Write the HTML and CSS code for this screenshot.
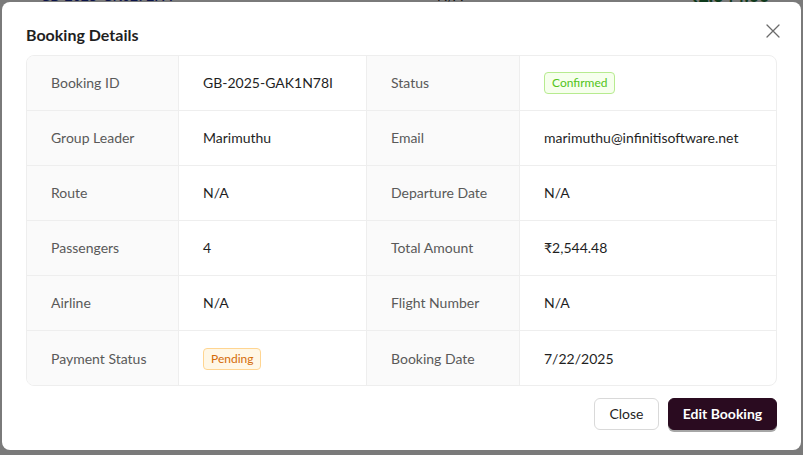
FILE: index.html
```html
<!DOCTYPE html>
<html>
<head>
<meta charset="utf-8">
<link rel="stylesheet" href="styles.css">
</head>
<body>
<div class="page">
  <div class="bg-row">
    <span class="bg-id">GB-2025-GK0272PA</span>
    <span class="bg-na">N/A</span>
    <span class="bg-dash">-</span>
    <span class="bg-amt">₹2,644.00</span>
  </div>
</div>
<div class="mask"></div>
<div class="modal">
  <div class="modal-header">
    <h2 class="modal-title">Booking Details</h2>
    <button class="modal-close" aria-label="Close">
      <svg width="14" height="14" viewBox="0 0 14 14"><path d="M1 1L13 13M13 1L1 13" stroke="#6b6b6b" stroke-width="1.3" fill="none" stroke-linecap="round"/></svg>
    </button>
  </div>
  <div class="desc">
    <div class="lbl">Booking ID</div><div class="val">GB-2025-GAK1N78I</div>
    <div class="lbl">Status</div><div class="val"><span class="tag tag-green">Confirmed</span></div>
    <div class="lbl">Group Leader</div><div class="val">Marimuthu</div>
    <div class="lbl">Email</div><div class="val">marimuthu@infinitisoftware.net</div>
    <div class="lbl">Route</div><div class="val">N/A</div>
    <div class="lbl">Departure Date</div><div class="val">N/A</div>
    <div class="lbl">Passengers</div><div class="val">4</div>
    <div class="lbl">Total Amount</div><div class="val">₹2,544.48</div>
    <div class="lbl">Airline</div><div class="val">N/A</div>
    <div class="lbl">Flight Number</div><div class="val">N/A</div>
    <div class="lbl last">Payment Status</div><div class="val last"><span class="tag tag-orange">Pending</span></div>
    <div class="lbl last">Booking Date</div><div class="val last">7/22/2025</div>
  </div>
  <div class="modal-footer">
    <button class="btn btn-default">Close</button>
    <button class="btn btn-primary">Edit Booking</button>
  </div>
</div>
</body>
</html>
```

FILE: styles.css
```css
* { box-sizing: border-box; }
html, body { margin: 0; padding: 0; }
body {
  width: 803px;
  height: 455px;
  overflow: hidden;
  background: #fff;
  font-family: Lato, "Noto Sans", sans-serif;
  position: relative;
}
.page { height: 455px; }
.bg-row {
  display: flex;
  align-items: center;
  height: 20px;
  margin-top: -15px;
  font-size: 14px;
}
.bg-id { margin-left: 40px; width: 397px; color: #1a2a9a; font-weight: 600; }
.bg-na { width: 166px; color: #222; }
.bg-dash { width: 85px; color: #222; }
.bg-amt { color: #1e7a3a; font-size: 18px; font-weight: 700; }
.mask {
  position: fixed;
  inset: 0;
  background: rgba(0, 0, 0, 0.52);
}
.modal {
  position: absolute;
  left: 2px;
  top: 2px;
  width: 799px;
  height: 448px;
  background: #fff;
  border-radius: 8px;
  padding: 20px 24px;
  display: flex;
  flex-direction: column;
}
.modal-header {
  display: flex;
  align-items: center;
  justify-content: space-between;
  margin-bottom: 8px;
  padding-top: 1px;
}
.modal-title {
  margin: 0;
  font-size: 16px;
  line-height: 24px;
  font-weight: 700;
  color: #1f1f1f;
}
.modal-close {
  position: absolute;
  top: 18px;
  right: 17px;
  width: 22px;
  height: 22px;
  border: 0;
  background: none;
  padding: 0;
  display: flex;
  align-items: center;
  justify-content: center;
}
.desc {
  display: grid;
  grid-template-columns: 152px 188px 153px 1fr;
  border: 1px solid #eeeeee;
  border-radius: 8px;
  overflow: hidden;
}
.lbl, .val {
  padding: 16px 24px;
  font-size: 14px;
  line-height: 22px;
  border-bottom: 1px solid #eeeeee;
  height: 55px;
  display: flex;
  align-items: center;
}
.lbl {
  background: #fafafa;
  color: #595959;
  border-right: 1px solid #eeeeee;
}
.val {
  color: #1f1f1f;
  border-right: 1px solid #eeeeee;
}
.val:nth-child(4n) { border-right: 0; }
.last { border-bottom: 0; }
.tag {
  display: inline-block;
  font-size: 12px;
  line-height: 20px;
  padding: 0 7px;
  border-radius: 4px;
  border: 1px solid;
}
.tag-green { color: #52c41a; background: #f6ffed; border-color: #b7eb8f; }
.tag-orange { color: #d46b08; background: #fff7e6; border-color: #ffd591; }
.modal-footer {
  margin-top: 12px;
  display: flex;
  justify-content: flex-end;
  gap: 9px;
}
.btn {
  height: 32px;
  padding: 4px 0;
  font-family: Lato, "Noto Sans", sans-serif;
  font-size: 14px;
  line-height: 22px;
  border-radius: 6px;
  cursor: pointer;
  text-align: center;
}
.btn-default {
  width: 65px;
  background: #fff;
  border: 1px solid #d9d9d9;
  color: #1f1f1f;
}
.btn-primary {
  width: 109px;
  background: #2a0b20;
  border: 1px solid #2a0b20;
  color: #fff;
  font-weight: 700;
  box-shadow: 0 2px 0 rgba(0, 0, 0, 0.35);
}
```
